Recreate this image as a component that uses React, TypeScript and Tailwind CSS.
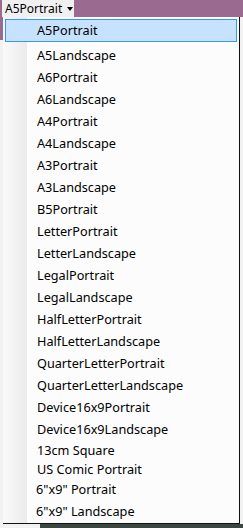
import React from "react";

const items: { label: string; h: number; x?: number }[] = [
  { label: "A5Landscape", h: 22 },
  { label: "A6Portrait", h: 22 },
  { label: "A6Landscape", h: 22 },
  { label: "A4Portrait", h: 22 },
  { label: "A4Landscape", h: 22 },
  { label: "A3Portrait", h: 22 },
  { label: "A3Landscape", h: 22 },
  { label: "B5Portrait", h: 22 },
  { label: "LetterPortrait", h: 22 },
  { label: "LetterLandscape", h: 22 },
  { label: "LegalPortrait", h: 22 },
  { label: "LegalLandscape", h: 22 },
  { label: "HalfLetterPortrait", h: 22 },
  { label: "HalfLetterLandscape", h: 22 },
  { label: "QuarterLetterPortrait", h: 22 },
  { label: "QuarterLetterLandscape", h: 22 },
  { label: "Device16x9Portrait", h: 22 },
  { label: "Device16x9Landscape", h: 22 },
  { label: "13cm Square", h: 20 },
  { label: "US Comic Portrait", h: 18 },
  { label: "6\"x9\" Portrait", h: 22, x: 1 },
  { label: "6\"x9\" Landscape", h: 22, x: 1 },
];

export default function App() {
  return (
    <div
      className="w-[243px] h-[528px] overflow-hidden bg-[#f2f2f2] text-[12.7px] text-black"
      style={{ fontFamily: '"Noto Sans", "Open Sans", sans-serif' }}
    >
      <div className="h-[17px] bg-[#9b6a91] flex items-end pl-[2px]">
        <div className="h-[17px] w-[72px] bg-[#f0f0f0] flex items-center pl-[3px] leading-none text-[12px]">
          <span>A5Portrait</span>
          <span className="ml-[5px] mt-[1px] w-0 h-0 border-l-[3px] border-r-[3px] border-t-[4px] border-l-transparent border-r-transparent border-t-black" />
        </div>
      </div>
      <div className="flex">
        <div className="w-[3px] flex flex-col">
          <div className="h-[23px] bg-[#9b6a91]" />
          <div className="h-[484px] bg-[#f2f2f2]" />
        </div>
        <div className="relative w-[237px] h-[507px] bg-[#fcfcfc] border-r border-b border-[#111] flex flex-col pt-[2px]">
          <div className="absolute left-0 top-0 bottom-0 w-[24px] bg-gradient-to-r from-[#fafafa] to-[#ebebeb]" />
          <div className="relative mx-[2px] mb-[3px] h-[23px] bg-[#c6e2ff] border border-[#3399ff] flex items-center pl-[31px]">
            A5Portrait
          </div>
          {items.map((it) => (
            <div
              key={it.label}
              className="relative flex items-center whitespace-nowrap"
              style={{ height: it.h, paddingLeft: 34 - (it.x ?? 0) }}
            >
              {it.label}
            </div>
          ))}
        </div>
      </div>
      <div className="flex h-[4px]">
        <div className="w-[40px] bg-[#f2f2f2]" />
        <div className="flex-1 bg-[#3c4640]" />
      </div>
    </div>
  );
}
